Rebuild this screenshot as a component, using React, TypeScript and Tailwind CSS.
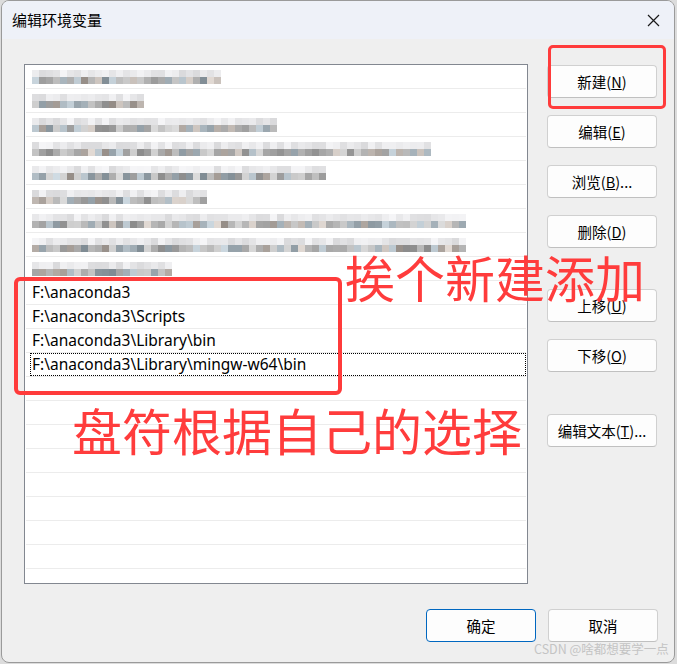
import React from "react";

const blurWidths = [191, 118, 248, 404, 294, 181, 434, 434, 140];

function rng(seed: number) {
  let s = seed;
  return () => {
    s = (s * 9301 + 49297) % 233280;
    return s / 233280;
  };
}

function Mosaic({ width, seed }: { width: number; seed: number }) {
  const r = rng(seed);
  const cells = Math.floor(width / 7);
  const top: string[] = [];
  const bot: string[] = [];
  for (let i = 0; i < cells; i++) {
    const a = Math.floor(218 + r() * 28);
    top.push(`rgb(${a},${a},${a + 2})`);
    const b = Math.floor(140 + r() * 80);
    const tint = r();
    bot.push(
      tint < 0.3
        ? `rgb(${b - 12},${b},${b + 8})`
        : tint < 0.5
        ? `rgb(${b + 8},${b},${b - 6})`
        : `rgb(${b},${b},${b})`
    );
  }
  return (
    <div className="flex flex-col">
      <div className="flex h-[7px]">
        {top.map((c, i) => (
          <div key={i} className="w-[7px] h-full" style={{ background: c }} />
        ))}
      </div>
      <div className="flex h-[7px]">
        {bot.map((c, i) => (
          <div key={i} className="w-[7px] h-full" style={{ background: c }} />
        ))}
      </div>
    </div>
  );
}

const paths = [
  "F:\\anaconda3",
  "F:\\anaconda3\\Scripts",
  "F:\\anaconda3\\Library\\bin",
  "F:\\anaconda3\\Library\\mingw-w64\\bin",
];

function Btn({
  children,
  primary,
  className = "",
}: {
  children: React.ReactNode;
  primary?: boolean;
  className?: string;
}) {
  return (
    <div
      className={`w-[110px] h-[33px] rounded-[4px] flex items-center justify-center text-[14.5px] text-black bg-[#fdfdfd] ${
        primary ? "border border-[#0067c0]" : "border border-[#d0d0d0] border-b-[#c0c0c0]"
      } ${className}`}
    >
      {children}
    </div>
  );
}

export default function App() {
  const rows: React.ReactNode[] = [];
  for (let i = 0; i < 22; i++) {
    let content: React.ReactNode = null;
    if (i < 9) {
      content = <Mosaic width={blurWidths[i]} seed={i * 37 + 11} />;
    } else if (i < 13) {
      content = <span>{paths[i - 9]}</span>;
    }
    const focused = i === 12;
    rows.push(
      <div key={i} className="h-[24px] flex flex-col">
        <div
          className={
            focused
              ? "flex-1 flex items-center border border-dotted border-black ml-[5px] mr-[1px] pl-[1px]"
              : "flex-1 flex items-center pl-[7px]"
          }
        >
          {content}
        </div>
        <div className="h-[1px] bg-[#ececec] mx-[1px]" />
      </div>
    );
  }

  return (
    <div
      className="w-[677px] h-[664px] bg-[#dcdcdc] relative overflow-hidden"
      style={{ fontFamily: '"Noto Sans", "Noto Sans CJK SC", sans-serif' }}
    >
      <div className="absolute left-[1px] top-0 w-[674px] h-[663px] rounded-[8px] border border-[#9a9a9a] bg-[#efefef] overflow-hidden flex flex-col">
        <div className="h-[38px] bg-[#eef1f8] flex items-center justify-between pl-[10px] pr-[14px] shrink-0">
          <span className="text-[15px] text-black" style={{ fontFamily: '"Noto Sans CJK SC", sans-serif' }}>
            编辑环境变量
          </span>
          <svg width="13" height="13" viewBox="0 0 13 13">
            <path d="M1 1L12 12M12 1L1 12" stroke="#1a1a1a" strokeWidth="1.2" />
          </svg>
        </div>
        <div className="flex pl-[22px] pt-[25px]" style={{ fontFamily: '"Noto Sans CJK SC", sans-serif' }}>
          <div
            className="w-[504px] h-[520px] bg-white border border-[#828790] overflow-hidden text-[15.5px] text-black leading-none"
            style={{ fontFamily: '"Noto Sans", sans-serif' }}
          >
            {rows}
          </div>
          <div className="flex flex-col ml-[19px] pt-[1px]">
            <Btn>
              新建(<u>N</u>)
            </Btn>
            <Btn className="mt-[17px]">
              编辑(<u>E</u>)
            </Btn>
            <Btn className="mt-[17px]">
              浏览(<u>B</u>)...
            </Btn>
            <Btn className="mt-[17px]">
              删除(<u>D</u>)
            </Btn>
            <Btn className="mt-[41px]">
              上移(<u>U</u>)
            </Btn>
            <Btn className="mt-[17px]">
              下移(<u>O</u>)
            </Btn>
            <Btn className="mt-[42px]">
              编辑文本(<u>T</u>)...
            </Btn>
          </div>
        </div>
        <div className="flex justify-end gap-[12px] pr-[16px] mt-[25px]" style={{ fontFamily: '"Noto Sans CJK SC", sans-serif' }}>
          <Btn primary>确定</Btn>
          <Btn>取消</Btn>
        </div>
      </div>

      {/* annotations */}
      <div className="absolute left-[548px] top-[45px] w-[118px] h-[64px] border-[3px] border-[#ff3b3b] rounded-[5px]" />
      <div className="absolute left-[14px] top-[277px] w-[328px] h-[118px] border-[4px] border-[#ff3b3b] rounded-[6px]" />
      <div
        className="absolute left-[345px] top-[251px] text-[50px] leading-none text-[#ff3c3c] whitespace-nowrap"
        style={{ fontFamily: '"Noto Sans CJK SC", sans-serif' }}
      >
        挨个新建添加
      </div>
      <div
        className="absolute left-[72px] top-[404px] text-[50px] leading-none text-[#ff3c3c] whitespace-nowrap"
        style={{ fontFamily: '"Noto Sans CJK SC", sans-serif' }}
      >
        盘符根据自己的选择
      </div>
      <div
        className="absolute left-[534px] top-[643px] text-[12.5px] leading-none text-[#c4c4c4] whitespace-nowrap"
        style={{ fontFamily: '"Noto Sans CJK SC", sans-serif' }}
      >
        CSDN @啥都想要学一点
      </div>
    </div>
  );
}
